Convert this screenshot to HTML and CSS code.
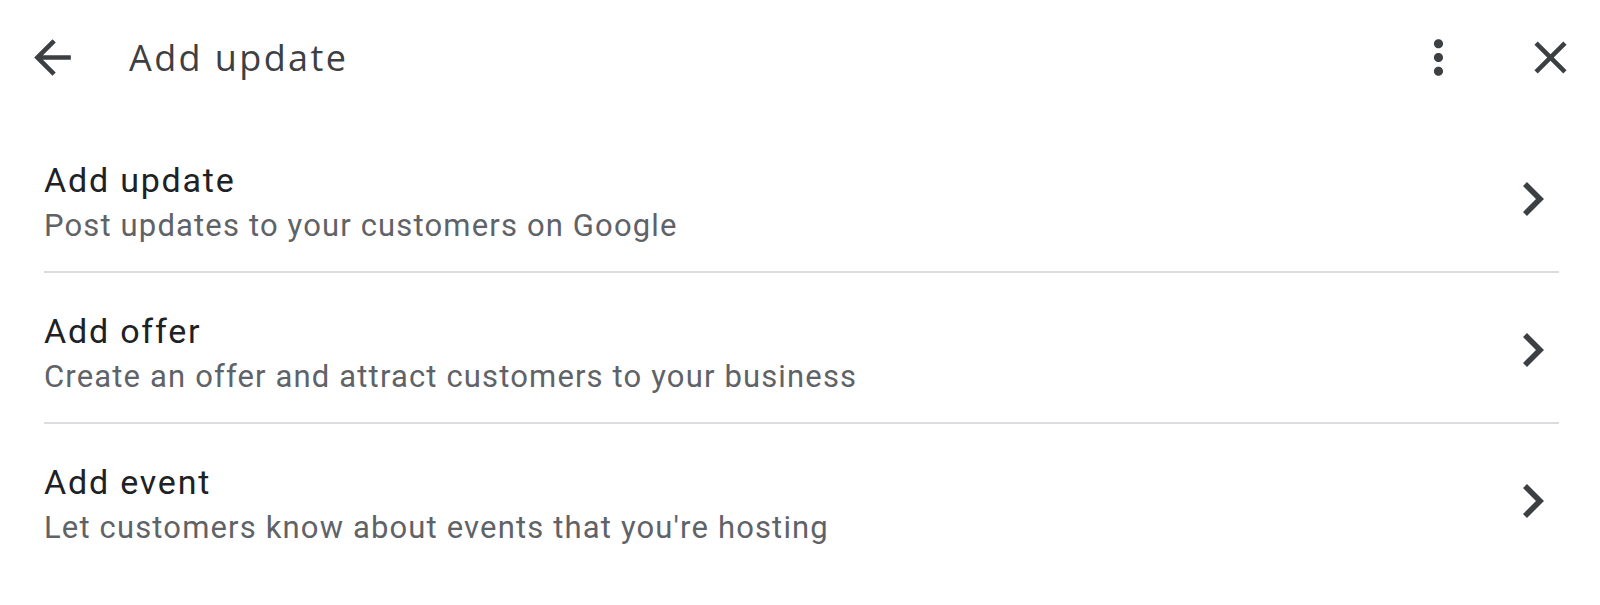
FILE: index.html
```html
<!DOCTYPE html>
<html lang="en">
<head>
<meta charset="utf-8">
<title>Add update</title>
<link rel="stylesheet" href="styles.css">
</head>
<body>
<div class="panel">
  <header class="topbar">
    <button class="icon-btn back" aria-label="Back">
      <svg width="55" height="55" viewBox="0 0 24 24"><path d="M20 11H7.83l5.59-5.59L12 4l-8 8 8 8 1.41-1.41L7.83 13H20v-2z"/></svg>
    </button>
    <h1 class="title">Add update</h1>
    <button class="icon-btn more" aria-label="More options">
      <svg width="55" height="55" viewBox="0 0 24 24"><path d="M12 8c1.1 0 2-.9 2-2s-.9-2-2-2-2 .9-2 2 .9 2 2 2zm0 2c-1.1 0-2 .9-2 2s.9 2 2 2 2-.9 2-2-.9-2-2-2zm0 6c-1.1 0-2 .9-2 2s.9 2 2 2 2-.9 2-2-.9-2-2-2z"/></svg>
    </button>
    <button class="icon-btn close" aria-label="Close">
      <svg width="55" height="55" viewBox="0 0 24 24"><path d="M19 6.41L17.59 5 12 10.59 6.41 5 5 6.41 10.59 12 5 17.59 6.41 19 12 13.41 17.59 19 19 17.59 13.41 12z"/></svg>
    </button>
  </header>
  <ul class="list">
    <li class="item">
      <div class="text">
        <div class="item-title">Add update</div>
        <div class="item-sub">Post updates to your customers on Google</div>
      </div>
      <svg class="chev" width="21" height="34" viewBox="8.59 6 7.41 12" preserveAspectRatio="none"><path d="M10 6L8.59 7.41 13.17 12l-4.58 4.59L10 18l6-6z"/></svg>
    </li>
    <li class="item">
      <div class="text">
        <div class="item-title">Add offer</div>
        <div class="item-sub">Create an offer and attract customers to your business</div>
      </div>
      <svg class="chev" width="21" height="34" viewBox="8.59 6 7.41 12" preserveAspectRatio="none"><path d="M10 6L8.59 7.41 13.17 12l-4.58 4.59L10 18l6-6z"/></svg>
    </li>
    <li class="item">
      <div class="text">
        <div class="item-title">Add event</div>
        <div class="item-sub">Let customers know about events that you're hosting</div>
      </div>
      <svg class="chev" width="21" height="34" viewBox="8.59 6 7.41 12" preserveAspectRatio="none"><path d="M10 6L8.59 7.41 13.17 12l-4.58 4.59L10 18l6-6z"/></svg>
    </li>
  </ul>
</div>
</body>
</html>
```
FILE: styles.css
```css
html, body {
  margin: 0;
  padding: 0;
  background: #ffffff;
}
body {
  width: 1600px;
  height: 605px;
  overflow: hidden;
  font-family: Roboto, "Liberation Sans", Arial, sans-serif;
}
.panel {
  display: flex;
  flex-direction: column;
}
.topbar {
  display: flex;
  align-items: center;
  height: 115px;
  padding: 0 22px 0 25px;
}
.icon-btn {
  display: flex;
  align-items: center;
  justify-content: center;
  width: 55px;
  height: 55px;
  padding: 0;
  border: 0;
  background: none;
  fill: #3c4043;
}
.icon-btn svg {
  display: block;
}
.title {
  flex: 1;
  margin: 0 0 0 49px;
  font-family: "Open Sans", "Noto Sans", sans-serif;
  font-weight: 400;
  font-size: 36px;
  line-height: 36px;
  letter-spacing: 2.4px;
  color: #3c4043;
}
.more {
  margin-right: 57px;
}
.list {
  list-style: none;
  margin: 0 41px 0 44px;
  padding: 7px 0 0;
}
.item {
  display: flex;
  align-items: center;
  padding: 35px 0 25px;
  border-bottom: 2px solid #dadce0;
}
.item:last-child {
  border-bottom: 0;
}
.text {
  flex: 1;
}
.item-title {
  font-size: 34px;
  line-height: 47px;
  letter-spacing: 1.8px;
  color: #202124;
}
.item-sub {
  padding-top: 2px;
  font-size: 31px;
  line-height: 40px;
  letter-spacing: 1.15px;
  color: #5f6368;
}
.chev {
  display: block;
  fill: #3c4043;
  margin: 0 15px 6px 0;
}
```
